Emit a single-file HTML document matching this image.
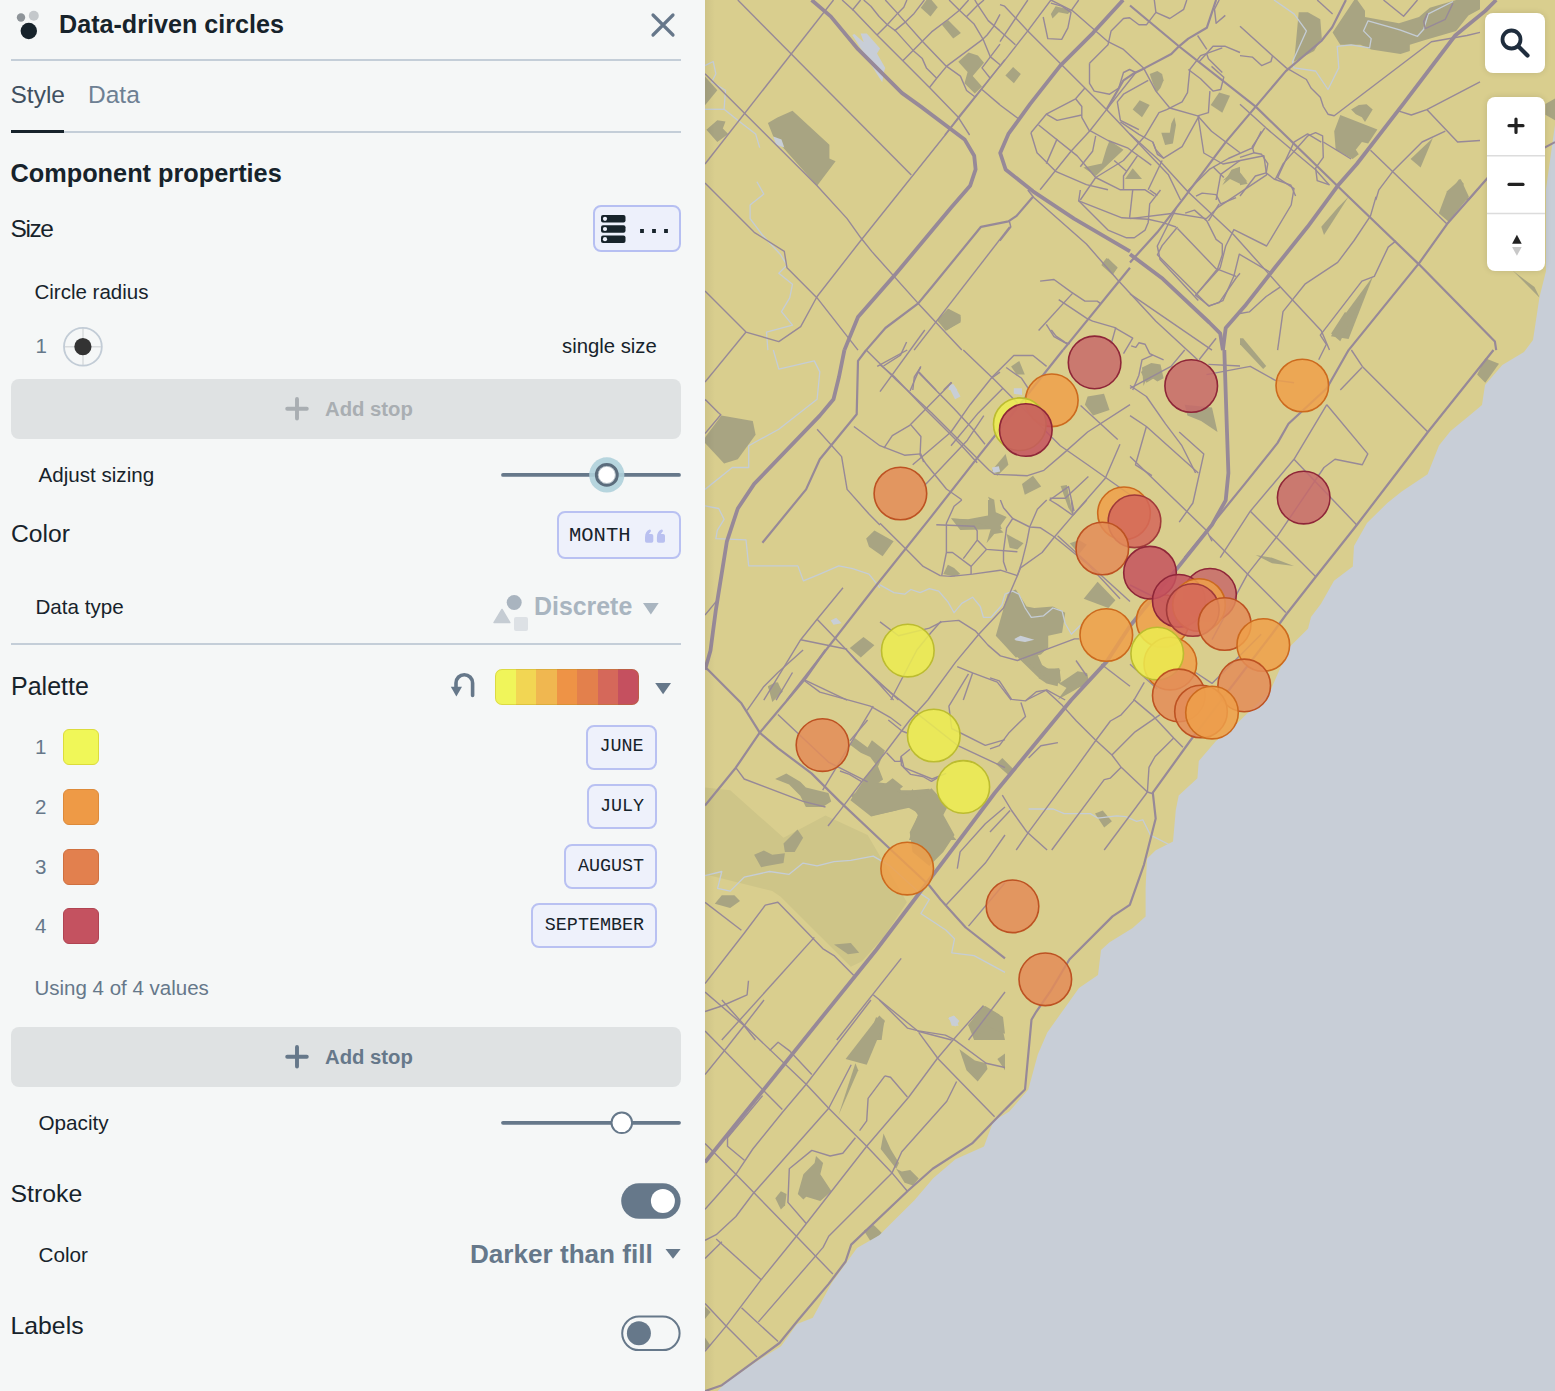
<!DOCTYPE html>
<html><head><meta charset="utf-8"><style>
html,body{margin:0;padding:0;width:1555px;height:1391px;overflow:hidden;background:#f5f7f7}
.t{position:absolute;white-space:nowrap}
.b{position:absolute}
#panel{position:absolute;left:0;top:0;width:705px;height:1391px;background:#f5f7f7}
#map{position:absolute;left:705px;top:0;width:850px;height:1391px;overflow:hidden;background:#d9cf8e}
</style></head><body>
<div id="panel">
<svg class="b" style="left:0;top:0" width="60" height="60" viewBox="0 0 60 60">
<circle cx="21" cy="17.5" r="4.2" fill="#8e9499"/><circle cx="33.8" cy="15.8" r="5" fill="#c4c8cb"/><circle cx="28.8" cy="31" r="8.2" fill="#17232b"/></svg>
<div class="t" style="left:59.0px;top:11.5px;font-size:25.15px;line-height:25.15px;font-weight:bold;color:#17232b;font-family:'Liberation Sans', sans-serif;letter-spacing:0px;">Data-driven circles</div>
<svg class="b" style="left:645px;top:7px" width="36" height="36" viewBox="645 7 36 36">
<path d="M653 15 L673 35 M673 15 L653 35" stroke="#66778a" stroke-width="3.2" stroke-linecap="round"/></svg>
<div class="b" style="left:11px;top:59px;width:670px;height:2px;background:#c4ced8"></div>
<div class="t" style="left:10.5px;top:83.3px;font-size:24.5px;line-height:24.5px;font-weight:normal;color:#3f5060;font-family:'Liberation Sans', sans-serif;letter-spacing:0px;">Style</div>
<div class="t" style="left:88.0px;top:83.3px;font-size:24.5px;line-height:24.5px;font-weight:normal;color:#6e8093;font-family:'Liberation Sans', sans-serif;letter-spacing:0px;">Data</div>
<div class="b" style="left:11px;top:131px;width:670px;height:2px;background:#c4ced8"></div>
<div class="b" style="left:11px;top:130px;width:53px;height:3px;background:#17232b"></div>
<div class="t" style="left:10.5px;top:161.4px;font-size:25.3px;line-height:25.3px;font-weight:bold;color:#17232b;font-family:'Liberation Sans', sans-serif;letter-spacing:0px;">Component properties</div>
<div class="t" style="left:10.5px;top:216.6px;font-size:24.5px;line-height:24.5px;font-weight:normal;color:#17232b;font-family:'Liberation Sans', sans-serif;letter-spacing:-1.4px;">Size</div>
<div class="b" style="left:593px;top:205px;width:84px;height:43px;border:2px solid #b6bff2;background:#edf0fb;border-radius:8px"></div>
<svg class="b" style="left:595px;top:205px" width="86" height="48" viewBox="595 205 86 48">
<rect x="601" y="215" width="24.5" height="7.6" rx="2" fill="#17232b"/>
<rect x="601" y="225.2" width="24.5" height="7.6" rx="2" fill="#17232b"/>
<rect x="601" y="235.4" width="24.5" height="7.6" rx="2" fill="#17232b"/>
<circle cx="605" cy="218.8" r="2.1" fill="#eef1fb"/><circle cx="605" cy="229" r="2.1" fill="#eef1fb"/><circle cx="605" cy="239.2" r="2.1" fill="#eef1fb"/>
<rect x="640.1" y="229" width="3.8" height="4" fill="#17232b"/><rect x="652.1" y="229" width="3.8" height="4" fill="#17232b"/><rect x="664.1" y="229" width="3.8" height="4" fill="#17232b"/>
</svg>
<div class="t" style="left:34.5px;top:281.6px;font-size:20.5px;line-height:20.5px;font-weight:normal;color:#17232b;font-family:'Liberation Sans', sans-serif;letter-spacing:0px;">Circle radius</div>
<div class="t" style="left:35.5px;top:335.6px;font-size:20.5px;line-height:20.5px;font-weight:normal;color:#66788a;font-family:'Liberation Sans', sans-serif;letter-spacing:0px;">1</div>
<svg class="b" style="left:60px;top:324px" width="46" height="46" viewBox="60 324 46 46">
<line x1="83" y1="328" x2="83" y2="366" stroke="#d9dcde" stroke-width="1.5"/>
<line x1="64" y1="346.8" x2="102" y2="346.8" stroke="#d9dcde" stroke-width="1.5"/>
<circle cx="82.9" cy="346.7" r="18.9" fill="none" stroke="#c2ccd6" stroke-width="1.8"/>
<circle cx="82.9" cy="346.7" r="8.6" fill="#333"/></svg>
<div class="t" style="left:562.0px;top:335.8px;font-size:20.3px;line-height:20.3px;font-weight:normal;color:#17232b;font-family:'Liberation Sans', sans-serif;letter-spacing:0px;">single size</div>
<div class="b" style="left:11px;top:379px;width:670px;height:60px;background:#dfe2e3;border-radius:8px"></div>
<svg class="b" style="left:280px;top:392px" width="34" height="34" viewBox="280 392 34 34">
<path d="M297 399 V418.6 M287.2 408.8 H306.8" stroke="#a9aeb2" stroke-width="3.9" stroke-linecap="round"/></svg>
<div class="t" style="left:325.0px;top:398.6px;font-size:20.3px;line-height:20.3px;font-weight:bold;color:#a9aeb2;font-family:'Liberation Sans', sans-serif;letter-spacing:0px;">Add stop</div>
<div class="t" style="left:38.5px;top:464.6px;font-size:20.6px;line-height:20.6px;font-weight:normal;color:#17232b;font-family:'Liberation Sans', sans-serif;letter-spacing:0px;">Adjust sizing</div>
<svg class="b" style="left:495px;top:452px" width="190" height="46" viewBox="495 452 190 46">
<line x1="503" y1="474.9" x2="679" y2="474.9" stroke="#66788a" stroke-width="3.8" stroke-linecap="round"/>
<circle cx="606.8" cy="474.9" r="17.6" fill="#afd0da" opacity="0.9"/>
<circle cx="606.8" cy="474.9" r="10.4" fill="#fff" stroke="#5b6c7c" stroke-width="3"/>
<circle cx="606.8" cy="474.9" r="8.6" fill="none" stroke="#9aa7b2" stroke-width="0.7"/>
</svg>
<div class="t" style="left:11.0px;top:521.9px;font-size:24.7px;line-height:24.7px;font-weight:normal;color:#17232b;font-family:'Liberation Sans', sans-serif;letter-spacing:0px;">Color</div>
<div class="b" style="left:557px;top:511px;width:120px;height:44px;border:2px solid #b9c1f2;background:#eef1fb;border-radius:8px"></div>
<div class="t" style="left:569.0px;top:526.3px;font-size:20.5px;line-height:20.5px;font-weight:normal;color:#17232b;font-family:'Liberation Mono', monospace;letter-spacing:0px;">MONTH</div>
<svg class="b" style="left:640px;top:524px" width="30" height="24" viewBox="640 524 30 24">
<path d="M645 541 V537.5 C645 533.5 646.8 530.6 649.6 529.6 Q651.2 529.4 651 531.2 L648.9 534 H651.5 Q653.3 534 653.3 535.8 V541 Q653.3 542.8 651.5 542.8 H646.8 Q645 542.8 645 541 Z" fill="#b9c0f0"/>
<path d="M656.9 541 V537.5 C656.9 533.5 658.7 530.6 661.5 529.6 Q663.1 529.4 662.9 531.2 L660.8 534 H663.2 Q665 534 665 535.8 V541 Q665 542.8 663.2 542.8 H658.7 Q656.9 542.8 656.9 541 Z" fill="#b9c0f0"/>
</svg>
<div class="t" style="left:35.5px;top:596.6px;font-size:20.6px;line-height:20.6px;font-weight:normal;color:#17232b;font-family:'Liberation Sans', sans-serif;letter-spacing:0px;">Data type</div>
<svg class="b" style="left:490px;top:590px" width="175" height="45" viewBox="490 590 175 45">
<circle cx="514.2" cy="602.5" r="7.5" fill="#a9b4bf"/>
<path d="M502 609.5 L509.8 622.6 L494 622.6 Z" fill="#c5ccd3" stroke="#c5ccd3" stroke-width="1.5" stroke-linejoin="round"/>
<rect x="514" y="617" width="14" height="14" rx="2" fill="#dde1e5"/>
<path d="M643 603 H658.7 L650.85 614.4 Z" fill="#a9b5c0"/>
</svg>
<div class="t" style="left:534.0px;top:593.6px;font-size:24.9px;line-height:24.9px;font-weight:bold;color:#a9b5c0;font-family:'Liberation Sans', sans-serif;letter-spacing:0px;">Discrete</div>
<div class="b" style="left:11px;top:642.8px;width:670px;height:2px;background:#c4ced8"></div>
<div class="t" style="left:11.0px;top:673.8px;font-size:25px;line-height:25px;font-weight:normal;color:#17232b;font-family:'Liberation Sans', sans-serif;letter-spacing:0px;">Palette</div>
<svg class="b" style="left:445px;top:665px" width="235" height="45" viewBox="445 665 235 45">
<path d="M472.6 695.5 V683 A8.3 8.3 0 0 0 456 683 V687" fill="none" stroke="#66788a" stroke-width="3.6" stroke-linecap="round"/>
<path d="M450.8 686.8 H462 L456.4 696.5 Z" fill="#66788a"/>
<path d="M655.2 683 H671 L663.1 694.3 Z" fill="#66788a"/>
</svg>
<div class="b" style="left:495px;top:669px;width:144px;height:36px;border-radius:7px;overflow:hidden;display:flex">
<div style="flex:1;background:#f0f55a"></div><div style="flex:1;background:#f2d653"></div><div style="flex:1;background:#f0b750"></div><div style="flex:1;background:#ee9346"></div><div style="flex:1;background:#e3804c"></div><div style="flex:1;background:#d5685a"></div><div style="flex:1;background:#c5505f"></div></div>
<div class="b" style="left:495px;top:669px;width:142px;height:34px;border-radius:7px;border:1px solid rgba(160,140,0,0.25)"></div>
<div class="t" style="left:35.0px;top:736.8px;font-size:20.5px;line-height:20.5px;font-weight:normal;color:#66788a;font-family:'Liberation Sans', sans-serif;letter-spacing:0px;">1</div>
<div class="b" style="left:63px;top:729px;width:34px;height:34px;border:1px solid #dcdc3c;background:#f0f758;border-radius:6px"></div>
<div class="b" style="left:586px;top:724.6px;width:66.6px;height:41px;border:2px solid #b9c1f2;background:#eef1fb;border-radius:8px"></div>
<div class="t" style="left:599.5px;top:738.0px;font-size:18.4px;line-height:18.4px;font-weight:normal;color:#17232b;font-family:'Liberation Mono', monospace;letter-spacing:0px;">JUNE</div>
<div class="t" style="left:35.0px;top:796.6px;font-size:20.5px;line-height:20.5px;font-weight:normal;color:#66788a;font-family:'Liberation Sans', sans-serif;letter-spacing:0px;">2</div>
<div class="b" style="left:63px;top:789.2px;width:34px;height:34px;border:1px solid #dd8a3a;background:#ee9a46;border-radius:6px"></div>
<div class="b" style="left:586.5px;top:784.3px;width:66.1px;height:41px;border:2px solid #b9c1f2;background:#eef1fb;border-radius:8px"></div>
<div class="t" style="left:600.0px;top:797.7px;font-size:18.4px;line-height:18.4px;font-weight:normal;color:#17232b;font-family:'Liberation Mono', monospace;letter-spacing:0px;">JULY</div>
<div class="t" style="left:35.0px;top:856.6px;font-size:20.5px;line-height:20.5px;font-weight:normal;color:#66788a;font-family:'Liberation Sans', sans-serif;letter-spacing:0px;">3</div>
<div class="b" style="left:63px;top:849.1px;width:34px;height:34px;border:1px solid #cf7040;background:#e2804e;border-radius:6px"></div>
<div class="b" style="left:564.4px;top:844.4px;width:88.2px;height:41px;border:2px solid #b9c1f2;background:#eef1fb;border-radius:8px"></div>
<div class="t" style="left:577.9px;top:857.8px;font-size:18.4px;line-height:18.4px;font-weight:normal;color:#17232b;font-family:'Liberation Mono', monospace;letter-spacing:0px;">AUGUST</div>
<div class="t" style="left:35.0px;top:915.6px;font-size:20.5px;line-height:20.5px;font-weight:normal;color:#66788a;font-family:'Liberation Sans', sans-serif;letter-spacing:0px;">4</div>
<div class="b" style="left:63px;top:908px;width:34px;height:34px;border:1px solid #b04452;background:#c45260;border-radius:6px"></div>
<div class="b" style="left:531.3px;top:903.4px;width:121.3px;height:41px;border:2px solid #b9c1f2;background:#eef1fb;border-radius:8px"></div>
<div class="t" style="left:544.8px;top:916.8px;font-size:18.4px;line-height:18.4px;font-weight:normal;color:#17232b;font-family:'Liberation Mono', monospace;letter-spacing:0px;">SEPTEMBER</div>
<div class="t" style="left:34.5px;top:977.8px;font-size:20.5px;line-height:20.5px;font-weight:normal;color:#66788a;font-family:'Liberation Sans', sans-serif;letter-spacing:0px;">Using 4 of 4 values</div>
<div class="b" style="left:11px;top:1027px;width:670px;height:60px;background:#dfe2e3;border-radius:8px"></div>
<svg class="b" style="left:280px;top:1040px" width="34" height="34" viewBox="280 1040 34 34">
<path d="M297 1047 V1066.6 M287.2 1056.8 H306.8" stroke="#66788a" stroke-width="3.9" stroke-linecap="round"/></svg>
<div class="t" style="left:325.0px;top:1046.6px;font-size:20.3px;line-height:20.3px;font-weight:bold;color:#66788a;font-family:'Liberation Sans', sans-serif;letter-spacing:0px;">Add stop</div>
<div class="t" style="left:38.5px;top:1113.0px;font-size:20.7px;line-height:20.7px;font-weight:normal;color:#17232b;font-family:'Liberation Sans', sans-serif;letter-spacing:0px;">Opacity</div>
<svg class="b" style="left:495px;top:1105px" width="190" height="36" viewBox="495 1105 190 36">
<line x1="503" y1="1122.8" x2="679" y2="1122.8" stroke="#66788a" stroke-width="3.8" stroke-linecap="round"/>
<circle cx="621.8" cy="1122.8" r="10.3" fill="#fff" stroke="#66788a" stroke-width="2"/>
</svg>
<div class="t" style="left:10.5px;top:1182.0px;font-size:24.8px;line-height:24.8px;font-weight:normal;color:#17232b;font-family:'Liberation Sans', sans-serif;letter-spacing:0px;">Stroke</div>
<svg class="b" style="left:615px;top:1178px" width="70" height="46" viewBox="615 1178 70 46">
<rect x="621.2" y="1183.2" width="59.4" height="35.6" rx="17.8" fill="#66788a"/>
<circle cx="662.9" cy="1200.9" r="12" fill="#fff"/></svg>
<div class="t" style="left:38.5px;top:1244.5px;font-size:20.7px;line-height:20.7px;font-weight:normal;color:#17232b;font-family:'Liberation Sans', sans-serif;letter-spacing:0px;">Color</div>
<div class="t" style="left:470.0px;top:1240.8px;font-size:26.1px;line-height:26.1px;font-weight:bold;color:#66788a;font-family:'Liberation Sans', sans-serif;letter-spacing:0px;">Darker than fill</div>
<svg class="b" style="left:660px;top:1245px" width="25" height="20" viewBox="660 1245 25 20">
<path d="M665.5 1249 H680.6 L673 1258.7 Z" fill="#66788a"/></svg>
<div class="t" style="left:10.5px;top:1314.4px;font-size:24.8px;line-height:24.8px;font-weight:normal;color:#17232b;font-family:'Liberation Sans', sans-serif;letter-spacing:0px;">Labels</div>
<svg class="b" style="left:615px;top:1310px" width="70" height="46" viewBox="615 1310 70 46">
<rect x="622.2" y="1316.5" width="57.4" height="33.6" rx="16.8" fill="none" stroke="#66788a" stroke-width="2"/>
<circle cx="638.9" cy="1333.3" r="12" fill="#66788a"/></svg>
</div>
<div id="map">
<svg class="b" style="left:0;top:0" width="850" height="1391" viewBox="705 0 850 1391">
<rect x="705" y="0" width="850" height="1391" fill="#d9ce8e"/>
<polygon points="705.0,787.4 730.2,790.2 783.5,837.8 825.5,815.4 867.6,835.0 906.9,902.3 884.4,936.0 862.0,961.2 850.8,966.8 780.7,896.7 772.3,891.1 705.0,874.3" fill="#cec588"/>
<polygon points="767.9,123.0 777.4,117.5 792.5,110.7 829.4,144.8 829.4,158.5 835.6,161.2 817.1,185.8 795.2,161.2 773.3,136.6" fill="#a8a482"/>
<polygon points="705.0,76.5 717.3,90.2 705.0,105.2" fill="#a8a482"/>
<polygon points="706.4,129.8 717.3,120.3 725.5,121.6 722.8,128.5 728.2,133.9 717.3,142.1" fill="#a8a482"/>
<polygon points="937.3,319.8 948.2,308.8 960.5,317.0 960.5,322.5 945.5,330.7" fill="#a8a482"/>
<polygon points="1101.3,265.1 1108.1,258.3 1117.7,267.8 1112.2,274.7" fill="#a8a482"/>
<polygon points="1438.8,213.2 1447.0,191.3 1460.7,179.0 1468.9,196.8 1448.4,221.4" fill="#a8a482"/>
<polygon points="1321.3,226.8 1337.7,207.7 1348.6,196.8 1324.0,235.0" fill="#a8a482"/>
<polygon points="1330.9,336.2 1345.9,312.9 1373.2,276.0 1348.6,338.9" fill="#a8a482"/>
<polygon points="1222.9,180.4 1236.6,168.1 1247.5,181.7 1231.1,177.6" fill="#a8a482"/>
<polygon points="1545.4,103.9 1555.0,98.4 1555.0,120.3 1545.4,114.8" fill="#a8a482"/>
<polygon points="1512.6,270.6 1534.5,287.0 1539.9,297.9 1518.1,276.0" fill="#a8a482"/>
<polygon points="705.0,437.5 721.4,415.6 752.8,421.1 755.6,434.7 737.8,459.3 724.1,463.4 705.0,442.9" fill="#a8a482"/>
<polygon points="866.2,538.6 874.4,530.4 893.6,541.3 882.6,556.3 869.0,546.8" fill="#a8a482"/>
<polygon points="1087.6,396.5 1104.0,393.7 1109.5,410.1 1093.1,415.6 1084.9,404.7" fill="#a8a482"/>
<polygon points="1011.1,366.4 1019.3,360.9 1024.8,374.6 1016.6,374.6" fill="#a8a482"/>
<polygon points="849.8,647.9 863.5,637.0 874.4,645.2 860.8,657.5" fill="#a8a482"/>
<polygon points="1022.0,483.9 1033.0,475.7 1041.2,486.6 1024.8,494.8" fill="#a8a482"/>
<polygon points="767.9,686.2 776.1,682.1 782.9,691.6 773.3,700.1" fill="#a8a482"/>
<polygon points="992.0,470.3 1005.6,453.9 1008.4,464.8 997.4,475.7" fill="#a8a482"/>
<polygon points="1038.4,678.0 1060.3,669.8 1057.6,686.2 1046.6,683.4" fill="#a8a482"/>
<polygon points="1184.7,404.7 1212.0,407.4 1217.5,432.0 1201.1,421.1 1187.4,415.6" fill="#a8a482"/>
<polygon points="1140.9,371.9 1151.9,363.7 1160.1,374.6 1146.4,382.8" fill="#a8a482"/>
<polygon points="1477.1,374.6 1485.3,358.2 1499.0,363.7 1485.3,382.8" fill="#a8a482"/>
<polygon points="1255.7,555.0 1272.1,557.7 1294.0,565.9 1272.1,563.2" fill="#a8a482"/>
<polygon points="850.8,795.8 873.2,781.8 895.6,784.6 901.2,790.2 912.5,790.2 929.3,788.8 940.5,809.8 954.5,835.0 943.3,851.9 929.3,865.9 912.5,851.9 909.7,832.2 918.1,815.4 912.5,807.0 873.2,815.4 862.0,807.0" fill="#a8a482"/>
<polygon points="775.1,779.0 786.3,773.4 800.3,781.8 805.9,787.4 828.4,793.0 831.2,801.4 822.7,807.0 805.9,807.0 800.3,795.8 789.1,784.6" fill="#a8a482"/>
<polygon points="768.1,686.4 777.9,682.2 782.1,692.1 772.3,701.9" fill="#a8a482"/>
<polygon points="783.5,843.4 797.5,829.4 803.1,837.8 794.7,851.9 784.9,851.9" fill="#a8a482"/>
<polygon points="754.1,854.7 763.9,850.4 772.3,854.7 784.9,853.3 783.5,863.1 766.7,865.9 761.1,867.3" fill="#a8a482"/>
<polygon points="714.8,903.7 721.8,895.3 734.4,895.3 740.0,900.9 730.2,907.9" fill="#a8a482"/>
<polygon points="834.0,944.4 850.8,943.0 859.2,952.8 848.0,954.2" fill="#a8a482"/>
<polygon points="867.6,1040.0 876.0,1017.3 884.4,1020.1 881.6,1040.0" fill="#a8a482"/>
<polygon points="968.5,1025.7 985.3,1006.0 999.4,1014.5 1005.0,1040.0 974.1,1040.0" fill="#a8a482"/>
<polygon points="845.6,1059.0 879.3,1015.5 884.9,1021.1 882.1,1028.1 866.7,1064.7" fill="#a8a482"/>
<polygon points="838.5,1115.3 855.4,1063.3 858.2,1070.3" fill="#a8a482"/>
<polygon points="797.8,1194.0 803.4,1174.3 814.6,1163.1 816.0,1156.0 823.1,1163.1 820.3,1174.3 831.5,1191.2 820.3,1201.0 806.2,1196.8 803.4,1199.6" fill="#a8a482"/>
<polygon points="775.3,1198.2 780.9,1191.2 786.5,1194.0 785.1,1205.2 780.9,1209.4" fill="#a8a482"/>
<polygon points="880.7,1149.0 883.5,1133.5 890.5,1149.0 899.0,1163.1 896.2,1168.7" fill="#a8a482"/>
<polygon points="896.2,1168.7 901.8,1171.5 910.2,1170.1 918.7,1178.5 913.0,1185.5 904.6,1182.7" fill="#a8a482"/>
<polygon points="863.8,1230.5 873.7,1224.9 882.1,1233.3 870.9,1241.8" fill="#a8a482"/>
<polygon points="967.9,1025.3 983.3,1005.6 1003.0,1016.9 1005.0,1033.7 997.4,1030.9 986.1,1025.3 977.7,1036.5" fill="#a8a482"/>
<polygon points="959.4,1049.2 974.9,1060.4 986.1,1063.3 987.5,1068.9 977.7,1081.5 966.5,1070.3" fill="#a8a482"/>
<polygon points="997.4,1059.0 1005.0,1053.4 1005.0,1070.3" fill="#a8a482"/>
<polygon points="705.0,1306.4 710.6,1312.1 705.0,1319.1" fill="#a8a482"/>
<polygon points="705.0,1337.4 710.6,1345.8 705.0,1350.0" fill="#a8a482"/>
<polygon points="1050.9,13.9 1055.6,6.2 1067.9,9.3 1071.0,10.8 1067.9,13.9 1058.7,12.3 1052.5,18.5" fill="#a8a482"/>
<polygon points="1005.4,75.6 1013.1,67.1 1020.8,74.1 1013.9,83.3" fill="#a8a482"/>
<polygon points="1149.7,74.1 1157.4,71.0 1162.1,74.1 1163.6,80.3 1160.5,88.0 1156.7,92.6 1152.8,83.3" fill="#a8a482"/>
<polygon points="1132.7,109.6 1139.7,100.3 1149.7,105.0 1142.0,117.3" fill="#a8a482"/>
<polygon points="1161.3,132.7 1169.8,132.7 1171.3,123.5 1174.4,117.3 1176.0,125.0 1172.9,143.5 1165.1,145.1" fill="#a8a482"/>
<polygon points="1083.3,167.5 1101.9,163.6 1106.5,148.2 1109.6,140.5 1123.5,149.7 1095.7,176.0" fill="#a8a482"/>
<polygon points="1125.0,179.0 1132.7,168.2 1142.0,179.0" fill="#a8a482"/>
<polygon points="1210.7,105.0 1219.2,92.6 1230.0,95.7 1222.3,112.7" fill="#a8a482"/>
<polygon points="1222.3,185.2 1231.5,169.8 1240.0,166.7 1240.0,183.7 1230.0,179.0" fill="#a8a482"/>
<polygon points="920.8,7.7 926.4,0.0 931.6,0.0 937.7,7.2 930.5,16.5" fill="#a8a482"/>
<polygon points="941.9,24.7 948.0,20.1 960.9,32.9 953.2,38.6" fill="#a8a482"/>
<polygon points="958.3,61.7 968.6,52.5 977.9,55.6 984.0,62.8 972.7,76.1 982.0,86.4 974.8,93.6 964.5,83.3 967.6,72.0" fill="#a8a482"/>
<polygon points="1332.6,32.4 1354.2,0.0 1357.3,0.0 1365.0,10.8 1365.0,17.0 1399.0,23.2 1419.0,17.0 1429.8,7.7 1456.1,0.0 1480.0,0.0 1480.0,9.3 1468.4,15.4 1456.1,30.9 1425.2,40.1 1409.8,44.8 1409.8,50.9 1400.5,54.0 1371.2,49.4 1360.4,44.8 1340.3,44.8" fill="#a8a482"/>
<polygon points="1295.6,46.3 1298.7,12.3 1307.9,12.3 1320.3,19.3 1321.8,38.6 1314.1,50.9 1294.0,61.7" fill="#a8a482"/>
<polygon points="1351.1,109.6 1358.8,105.0 1366.6,104.2 1372.7,109.6 1365.0,121.9 1361.9,117.3 1355.8,114.2" fill="#a8a482"/>
<polygon points="1334.2,131.2 1340.3,115.0 1377.4,129.6 1368.1,143.5 1361.9,142.0 1355.8,149.7 1358.8,154.3 1352.7,159.0 1335.7,149.7" fill="#a8a482"/>
<polygon points="1410.6,159.0 1432.9,138.1 1420.6,167.5" fill="#a8a482"/>
<polygon points="1444.5,200.0 1459.2,179.0 1463.8,183.7 1462.3,188.3 1470.0,200.0" fill="#a8a482"/>
<polygon points="1240.0,172.9 1247.7,183.7 1240.0,185.2" fill="#a8a482"/>
<polygon points="1101.9,264.1 1106.5,257.9 1117.3,267.2 1112.7,274.9" fill="#a8a482"/>
<polygon points="1142.0,367.5 1151.3,362.9 1160.5,364.4 1163.6,378.3 1157.4,381.4 1148.2,375.2 1143.5,386.0" fill="#a8a482"/>
<polygon points="937.5,321.2 948.3,308.8 960.6,315.0 960.6,321.2 946.8,330.5" fill="#a8a482"/>
<polygon points="1060.6,485.9 1066.8,485.1 1072.9,515.2 1068.3,507.5" fill="#a8a482"/>
<polygon points="951.0,518.3 988.0,521.4 994.2,499.8 988.0,496.7 1001.9,529.1 960.3,530.0" fill="#a8a482"/>
<polygon points="1010.1,650.0 1045.6,650.0 1040.9,654.6 1020.9,659.3 1036.3,662.3 1044.0,668.5 1059.5,668.5 1061.0,680.9 1056.4,682.4 1048.7,676.2 1039.4,678.6" fill="#a8a482"/>
<polygon points="1057.9,699.4 1067.2,687.0 1074.9,682.4 1082.6,673.2 1087.2,673.2 1088.8,680.9 1074.9,690.1" fill="#a8a482"/>
<polygon points="996.2,764.2 1002.3,758.0 1014.7,770.4 1008.5,775.0" fill="#a8a482"/>
<polygon points="1095.0,813.6 1102.7,810.5 1111.9,821.3 1104.2,827.5" fill="#a8a482"/>
<polygon points="951.0,518.5 968.0,519.3 988.0,515.4 988.0,500.0 994.2,500.0 995.8,512.3 1006.6,517.0 998.8,527.8 1003.5,532.4 994.2,534.0 986.5,543.2 991.1,527.8 978.8,523.2 966.4,522.4 955.6,520.8" fill="#a8a482"/>
<polygon points="1006.6,534.0 1023.5,543.2 1017.4,549.4 1009.6,547.8" fill="#a8a482"/>
<polygon points="943.3,574.1 947.9,564.8 954.1,567.9 960.3,574.1 954.1,576.4" fill="#a8a482"/>
<polygon points="1083.7,598.8 1097.6,581.8 1115.4,600.3 1108.4,608.0" fill="#a8a482"/>
<polygon points="995.8,635.8 1008.1,592.6 1015.8,589.5 1026.6,606.5 1034.3,608.0 1052.9,606.5 1065.2,612.7 1062.1,632.7 1048.2,635.8 1048.2,648.2 1034.3,654.3 1015.8,657.4" fill="#a8a482"/>
<polygon points="1022.0,659.0 1037.4,654.3 1042.1,665.1 1049.8,669.8 1059.0,668.2 1060.6,683.7 1054.4,682.1 1045.1,676.0" fill="#a8a482"/>
<polygon points="1059.0,683.7 1077.6,671.3 1086.8,672.9 1086.8,685.2 1069.8,689.8" fill="#a8a482"/>
<polygon points="1069.8,543.2 1079.1,540.1 1086.8,544.8 1079.1,554.0" fill="#a8a482"/>
<polygon points="850.4,745.0 854.7,738.1 867.6,747.6 871.9,740.3 884.9,750.6 878.0,766.6 883.1,779.5 874.5,785.6 878.0,789.5 892.6,778.2 903.0,786.4 897.0,791.6 909.0,795.0 912.5,789.0 917.7,798.5 931.5,788.2 947.9,806.3 940.1,821.0 956.5,840.0 909.0,840.0 918.5,813.2 904.7,805.4 896.1,810.6 871.1,816.6 850.4,800.2 864.2,779.5 875.4,764.0 870.2,757.1 860.7,752.8" fill="#a8a482"/>
<polygon points="1331.1,333.5 1345.0,311.9 1351.1,316.6 1372.7,276.4 1340.3,341.3" fill="#a8a482"/>
<polygon points="1240.0,338.2 1243.1,338.2 1266.2,366.0 1263.2,369.0 1240.0,344.3" fill="#a8a482"/>
<polyline points="705.0,65.6 713.2,61.5 715.9,73.8 711.8,82.0 725.5,90.2 724.1,109.3 737.8,120.3 755.6,133.9 759.7,147.6" fill="none" stroke="#c5cdd6" stroke-width="1.3" stroke-linejoin="round"/>
<polyline points="705.0,109.3 724.1,109.3" fill="none" stroke="#c5cdd6" stroke-width="1.3" stroke-linejoin="round"/>
<polyline points="756.9,181.7 763.8,194.0 750.1,205.0 750.1,218.6 762.4,235.0 780.2,254.2 787.0,265.1 778.8,273.3 792.5,284.2 789.7,297.9 781.5,311.6 792.5,325.2 766.5,332.1 767.9,350.1" fill="none" stroke="#c5cdd6" stroke-width="1.3" stroke-linejoin="round"/>
<polyline points="773.3,350.0 778.8,369.1 814.3,360.9 819.8,371.9 817.1,399.2 778.8,429.3 748.7,445.7 748.7,467.5 732.3,467.5 705.0,489.4" fill="none" stroke="#c5cdd6" stroke-width="1.3" stroke-linejoin="round"/>
<polyline points="705.0,875.7 721.8,871.5 717.6,888.3 730.2,891.1 744.2,877.1 769.5,871.5 789.1,874.3 803.1,863.1 817.1,865.9 834.0,861.7 850.8,860.3 873.2,856.1 890.0,865.9 920.9,893.9 929.3,899.5 920.9,913.5 946.1,930.3 954.5,938.8 951.7,952.8 974.1,955.6 1005.0,972.4" fill="none" stroke="#c5cdd6" stroke-width="1.3" stroke-linejoin="round"/>
<polyline points="1274.0,0.0 1294.0,13.9 1306.4,30.9 1292.5,61.7 1294.0,67.9 1315.6,71.0 1328.0,89.5 1338.8,67.9 1337.2,46.3 1351.1,44.8 1369.6,47.8 1371.2,38.6 1363.5,30.9 1368.1,20.8 1392.8,27.8 1400.5,30.1 1417.5,36.3 1423.7,29.3 1428.3,13.9 1453.0,1.5" fill="none" stroke="#c5cdd6" stroke-width="1.3" stroke-linejoin="round"/>
<polyline points="1028.6,809.0 1053.3,809.0 1064.1,813.6 1090.3,813.6 1098.0,818.2 1110.4,816.7 1116.6,815.9 1125.8,816.7 1136.6,821.3 1142.8,819.8 1150.5,835.2 1169.0,844.5" fill="none" stroke="#c5cdd6" stroke-width="1.3" stroke-linejoin="round"/>
<polyline points="705.0,505.8 718.7,508.5 724.1,519.4 717.3,530.4 715.9,538.6 746.0,539.9 748.7,565.9 773.3,565.9 797.9,565.9 803.4,580.9 819.8,574.1 838.9,565.9 852.6,568.6 869.0,574.1 879.9,587.8" fill="none" stroke="#c5cdd6" stroke-width="1.3" stroke-linejoin="round"/>
<polyline points="880.0,584.9 893.9,592.6 904.7,594.2 910.9,589.5 920.1,592.6 929.4,588.7 938.7,591.1 947.9,601.9 954.1,612.7 961.8,603.4 972.6,597.2 980.3,606.5 983.4,617.3 991.1,617.3 1001.9,605.0 1005.0,594.2 1012.7,591.1 1018.9,594.2 1025.1,608.0 1031.3,617.3 1043.6,615.8 1052.9,608.0 1062.1,611.1 1065.2,623.5 1071.4,634.3 1080.6,625.0" fill="none" stroke="#c5cdd6" stroke-width="1.3" stroke-linejoin="round"/>
<polygon points="773.3,136.6 781.5,139.4 784.3,147.6 776.1,144.8" fill="#c8ced7"/>
<polygon points="948.2,385.5 953.7,384.2 960.5,396.5 955.1,399.2" fill="#c8ced7"/>
<polygon points="1013.8,388.3 1022.0,388.3 1022.0,395.1 1013.8,393.7" fill="#c8ced7"/>
<polygon points="992.0,467.5 998.8,466.2 1000.2,471.6 993.3,473.0" fill="#c8ced7"/>
<polygon points="830.7,620.6 836.2,617.8 841.6,623.3 833.5,624.7" fill="#c8ced7"/>
<polygon points="948.9,1017.3 954.5,1015.9 958.7,1025.7 951.7,1025.7" fill="#c8ced7"/>
<polygon points="948.2,1018.3 953.8,1015.5 959.4,1021.1 955.2,1026.7" fill="#c8ced7"/>
<polygon points="852.3,35.0 854.4,34.0 863.7,42.2 860.6,33.4 866.8,33.4 880.1,48.4 877.0,53.5 885.3,67.9 884.2,71.0 882.2,82.3" fill="#c8ced7"/>
<polygon points="949.8,384.5 952.9,384.5 957.6,390.0 948.3,390.0" fill="#c8ced7"/>
<polygon points="1014.3,638.9 1020.5,635.8 1034.3,639.7 1025.1,642.0 1015.8,640.5" fill="#c8ced7"/>
<polygon points="1555.0,124.7 1546.0,189.0 1546.0,271.0 1539.5,297.0 1533.0,340.0 1524.0,352.0 1502.3,365.0 1485.0,385.0 1482.0,405.0 1468.0,416.8 1450.6,431.0 1439.0,445.6 1427.6,474.3 1401.7,491.6 1387.3,503.0 1367.0,523.0 1354.0,546.0 1352.8,566.4 1334.0,580.7 1321.0,603.8 1311.0,617.0 1308.0,628.8 1289.5,647.0 1270.0,691.4 1239.0,721.6 1216.0,741.0 1198.8,761.0 1197.4,778.3 1178.7,795.6 1175.8,810.0 1173.0,841.6 1155.7,850.2 1147.0,858.8 1145.6,887.6 1145.6,916.4 1132.7,928.0 1109.6,942.2 1101.0,950.0 1098.0,975.0 1079.0,988.0 1047.3,1032.4 1037.8,1054.6 1028.3,1089.5 1009.3,1111.6 993.4,1121.0 984.0,1146.5 955.4,1159.2 933.2,1178.2 914.2,1200.4 892.0,1222.6 879.3,1235.3 857.0,1248.0 831.8,1282.8 812.8,1317.7 797.0,1324.0 781.0,1346.2 755.7,1362.0 724.0,1384.2 717.7,1391.0 1555.0,1391.0" fill="#c8ced7"/>
<polyline points="737.8,0.0 911.3,174.9" fill="none" stroke="#978998" stroke-width="1.4" stroke-linejoin="round"/>
<polyline points="705.0,73.8 817.1,185.8 847.1,218.6 860.8,237.8 871.7,251.4 918.2,303.4 961.9,350.1" fill="none" stroke="#978998" stroke-width="1.4" stroke-linejoin="round"/>
<polyline points="705.0,183.1 754.2,232.3 784.3,251.4 787.0,267.8 817.1,297.9 858.0,350.1" fill="none" stroke="#978998" stroke-width="1.4" stroke-linejoin="round"/>
<polyline points="833.5,0.0 705.0,164.0" fill="none" stroke="#978998" stroke-width="1.4" stroke-linejoin="round"/>
<polyline points="705.0,291.1 746.0,332.1 778.8,341.6 800.7,326.6 817.1,296.5 860.8,240.5 948.2,131.2 981.6,89.4 1004.8,59.6" fill="none" stroke="#978998" stroke-width="1.4" stroke-linejoin="round"/>
<polyline points="914.1,350.1 1009.7,226.8" fill="none" stroke="#978998" stroke-width="1.4" stroke-linejoin="round"/>
<polyline points="1130.0,133.9 1160.1,161.2 1187.4,191.3 1233.9,235.0 1283.0,289.7 1321.3,330.7 1329.5,350.1" fill="none" stroke="#978998" stroke-width="1.4" stroke-linejoin="round"/>
<polyline points="1130.0,293.8 1212.0,350.1" fill="none" stroke="#978998" stroke-width="1.4" stroke-linejoin="round"/>
<polyline points="1370.5,150.3 1447.0,224.1" fill="none" stroke="#978998" stroke-width="1.4" stroke-linejoin="round"/>
<polyline points="1376.0,196.8 1370.5,215.9 1354.1,240.5 1337.7,262.4 1304.9,284.2 1283.0,311.6 1277.6,350.1" fill="none" stroke="#978998" stroke-width="1.4" stroke-linejoin="round"/>
<polyline points="1198.3,117.5 1203.8,153.0 1222.9,164.0 1263.9,155.8 1266.6,174.9 1217.5,207.7 1206.5,218.6 1173.7,213.2 1130.0,218.6" fill="none" stroke="#978998" stroke-width="1.4" stroke-linejoin="round"/>
<polyline points="1321.3,142.1 1307.6,133.9 1294.0,142.1 1277.6,177.6 1294.0,188.6 1291.2,205.0 1266.6,246.0 1233.9,229.6 1225.7,246.0 1220.2,267.8 1195.6,295.2 1209.3,306.1 1222.9,300.6 1233.9,276.0 1239.3,254.2 1272.1,273.3" fill="none" stroke="#978998" stroke-width="1.4" stroke-linejoin="round"/>
<polyline points="1261.2,131.2 1253.0,147.6 1228.4,158.5 1209.3,169.4 1187.4,191.3" fill="none" stroke="#978998" stroke-width="1.4" stroke-linejoin="round"/>
<polyline points="1176.5,207.7 1157.3,246.0 1160.1,259.6 1198.3,300.6" fill="none" stroke="#978998" stroke-width="1.4" stroke-linejoin="round"/>
<polyline points="853.9,426.5 879.9,445.7 904.5,455.2 920.9,453.9 923.6,462.1" fill="none" stroke="#978998" stroke-width="1.4" stroke-linejoin="round"/>
<polyline points="705.0,399.2 718.7,412.9" fill="none" stroke="#978998" stroke-width="1.4" stroke-linejoin="round"/>
<polyline points="817.1,429.3 841.6,456.6 847.1,489.4 869.0,514.0 879.9,524.9" fill="none" stroke="#978998" stroke-width="1.4" stroke-linejoin="round"/>
<polyline points="866.2,350.0 896.3,380.1 931.8,412.9 989.2,470.3 994.7,474.4 1027.5,475.7 1043.9,470.3 1063.0,453.9 1087.6,432.0 1130.0,404.7" fill="none" stroke="#978998" stroke-width="1.4" stroke-linejoin="round"/>
<polyline points="963.3,350.0 994.7,380.1 1027.5,412.9 1060.3,445.7 1087.6,464.8 1130.0,494.8" fill="none" stroke="#978998" stroke-width="1.4" stroke-linejoin="round"/>
<polyline points="910.0,391.0 918.2,371.9 920.9,366.4" fill="none" stroke="#978998" stroke-width="1.4" stroke-linejoin="round"/>
<polyline points="877.2,366.4 907.2,350.0" fill="none" stroke="#978998" stroke-width="1.4" stroke-linejoin="round"/>
<polyline points="992.0,377.3 1013.8,355.5 1033.0,355.5 1046.6,366.4" fill="none" stroke="#978998" stroke-width="1.4" stroke-linejoin="round"/>
<polyline points="705.0,615.1 717.3,600.1" fill="none" stroke="#978998" stroke-width="1.4" stroke-linejoin="round"/>
<polyline points="763.8,700.1 800.7,639.7 817.1,619.2 843.0,587.8" fill="none" stroke="#978998" stroke-width="1.4" stroke-linejoin="round"/>
<polyline points="817.1,619.2 879.9,684.8 893.6,700.1" fill="none" stroke="#978998" stroke-width="1.4" stroke-linejoin="round"/>
<polyline points="803.4,679.3 847.1,700.1" fill="none" stroke="#978998" stroke-width="1.4" stroke-linejoin="round"/>
<polyline points="800.7,639.7 847.1,649.3" fill="none" stroke="#978998" stroke-width="1.4" stroke-linejoin="round"/>
<polyline points="951.0,445.7 978.3,412.9 1002.9,388.3" fill="none" stroke="#978998" stroke-width="1.4" stroke-linejoin="round"/>
<polyline points="912.7,464.8 951.0,432.0 970.1,404.7 992.0,377.3" fill="none" stroke="#978998" stroke-width="1.4" stroke-linejoin="round"/>
<polyline points="923.6,486.6 967.4,440.2 983.8,415.6" fill="none" stroke="#978998" stroke-width="1.4" stroke-linejoin="round"/>
<polyline points="1049.4,500.3 1068.5,486.6 1074.0,511.2" fill="none" stroke="#978998" stroke-width="1.4" stroke-linejoin="round"/>
<polyline points="1057.6,535.8 1130.0,601.4" fill="none" stroke="#978998" stroke-width="1.4" stroke-linejoin="round"/>
<polyline points="776.1,700.1 792.5,672.5" fill="none" stroke="#978998" stroke-width="1.4" stroke-linejoin="round"/>
<polyline points="1101.3,664.3 1130.0,686.2" fill="none" stroke="#978998" stroke-width="1.4" stroke-linejoin="round"/>
<polyline points="1351.4,350.0 1362.3,366.4 1427.9,432.0" fill="none" stroke="#978998" stroke-width="1.4" stroke-linejoin="round"/>
<polyline points="1294.0,459.3 1356.8,524.9" fill="none" stroke="#978998" stroke-width="1.4" stroke-linejoin="round"/>
<polyline points="1250.3,511.2 1315.8,576.8" fill="none" stroke="#978998" stroke-width="1.4" stroke-linejoin="round"/>
<polyline points="1209.3,535.8 1285.8,612.4" fill="none" stroke="#978998" stroke-width="1.4" stroke-linejoin="round"/>
<polyline points="1130.0,456.6 1206.5,530.4 1212.0,541.3" fill="none" stroke="#978998" stroke-width="1.4" stroke-linejoin="round"/>
<polyline points="1326.8,404.7 1367.8,453.9 1362.3,464.8 1335.0,459.3 1324.0,467.5 1277.6,535.8 1247.5,574.1 1212.0,639.7" fill="none" stroke="#978998" stroke-width="1.4" stroke-linejoin="round"/>
<polyline points="1220.2,557.7 1250.3,511.2 1294.0,459.3 1326.8,404.7" fill="none" stroke="#978998" stroke-width="1.4" stroke-linejoin="round"/>
<polyline points="1130.0,385.5 1146.4,396.5 1165.5,423.8 1181.9,445.7 1195.6,473.0" fill="none" stroke="#978998" stroke-width="1.4" stroke-linejoin="round"/>
<polyline points="1130.0,415.6 1146.4,426.5 1173.7,451.1 1198.3,473.0" fill="none" stroke="#978998" stroke-width="1.4" stroke-linejoin="round"/>
<polyline points="1146.4,426.5 1135.5,464.8 1151.9,475.7" fill="none" stroke="#978998" stroke-width="1.4" stroke-linejoin="round"/>
<polyline points="1179.2,432.0 1203.8,453.9 1192.9,503.0 1179.2,522.2" fill="none" stroke="#978998" stroke-width="1.4" stroke-linejoin="round"/>
<polyline points="1130.0,388.3 1171.0,366.4 1184.7,350.0" fill="none" stroke="#978998" stroke-width="1.4" stroke-linejoin="round"/>
<polyline points="1206.5,374.6 1250.3,366.4 1274.8,380.1 1294.0,382.8" fill="none" stroke="#978998" stroke-width="1.4" stroke-linejoin="round"/>
<polyline points="1130.0,585.0 1168.3,604.2" fill="none" stroke="#978998" stroke-width="1.4" stroke-linejoin="round"/>
<polyline points="1130.0,664.3 1157.3,688.9" fill="none" stroke="#978998" stroke-width="1.4" stroke-linejoin="round"/>
<polyline points="1195.6,672.5 1212.0,683.4 1261.2,634.2" fill="none" stroke="#978998" stroke-width="1.4" stroke-linejoin="round"/>
<polyline points="764.0,1000.0 744.4,1025.3 723.3,1052.0 705.0,1074.5" fill="none" stroke="#978998" stroke-width="1.4" stroke-linejoin="round"/>
<polyline points="721.9,1000.0 744.4,1025.3 806.2,1084.3 828.7,1108.2 866.7,1146.2 892.0,1172.9 907.4,1191.2" fill="none" stroke="#978998" stroke-width="1.4" stroke-linejoin="round"/>
<polyline points="705.0,1030.9 782.3,1109.6" fill="none" stroke="#978998" stroke-width="1.4" stroke-linejoin="round"/>
<polyline points="769.7,1050.6 778.1,1042.2 789.3,1050.6 811.8,1074.5" fill="none" stroke="#978998" stroke-width="1.4" stroke-linejoin="round"/>
<polyline points="762.6,1095.6 727.5,1137.8 727.5,1146.2 744.4,1160.2" fill="none" stroke="#978998" stroke-width="1.4" stroke-linejoin="round"/>
<polyline points="705.0,1143.4 735.9,1174.3 796.4,1236.2 832.9,1274.1" fill="none" stroke="#978998" stroke-width="1.4" stroke-linejoin="round"/>
<polyline points="716.2,1239.0 761.2,1279.7" fill="none" stroke="#978998" stroke-width="1.4" stroke-linejoin="round"/>
<polyline points="705.0,1303.6 726.1,1326.1 757.0,1357.0" fill="none" stroke="#978998" stroke-width="1.4" stroke-linejoin="round"/>
<polyline points="741.5,1307.8 778.1,1341.6" fill="none" stroke="#978998" stroke-width="1.4" stroke-linejoin="round"/>
<polyline points="918.7,1032.3 938.3,1059.0 994.6,1116.7" fill="none" stroke="#978998" stroke-width="1.4" stroke-linejoin="round"/>
<polyline points="884.9,1075.9 890.5,1077.3 907.4,1097.0" fill="none" stroke="#978998" stroke-width="1.4" stroke-linejoin="round"/>
<polyline points="879.3,1000.0 907.4,1028.1 918.7,1030.9 945.4,1035.1 953.8,1039.4 986.1,1063.3 1005.0,1067.5" fill="none" stroke="#978998" stroke-width="1.4" stroke-linejoin="round"/>
<polyline points="870.9,1000.0 806.2,1084.3 782.3,1112.5 752.8,1149.0 735.9,1174.3 716.2,1196.8 705.0,1209.4" fill="none" stroke="#978998" stroke-width="1.4" stroke-linejoin="round"/>
<polyline points="851.2,1064.7 828.7,1108.2 752.8,1194.0 735.9,1216.5 716.2,1234.7 705.0,1240.4" fill="none" stroke="#978998" stroke-width="1.4" stroke-linejoin="round"/>
<polyline points="983.3,1005.6 952.4,1040.8 936.9,1059.0 908.8,1097.0 866.7,1146.2 796.4,1236.2 761.2,1279.7 726.1,1326.1 705.0,1351.4" fill="none" stroke="#978998" stroke-width="1.4" stroke-linejoin="round"/>
<polyline points="956.6,1081.5 946.8,1101.2 901.8,1151.8 892.0,1172.9 828.7,1236.2 823.1,1247.4 758.4,1321.9" fill="none" stroke="#978998" stroke-width="1.4" stroke-linejoin="round"/>
<polyline points="855.4,1137.8 842.8,1153.2 830.1,1156.0 811.8,1150.4 789.3,1168.7 787.9,1202.4 806.2,1223.5" fill="none" stroke="#978998" stroke-width="1.4" stroke-linejoin="round"/>
<polyline points="884.9,1075.9 868.1,1098.4 866.7,1120.9 859.6,1130.7" fill="none" stroke="#978998" stroke-width="1.4" stroke-linejoin="round"/>
<polyline points="705.0,1258.6 721.9,1241.8" fill="none" stroke="#978998" stroke-width="1.4" stroke-linejoin="round"/>
<polyline points="705.0,902.3 741.4,930.3" fill="none" stroke="#978998" stroke-width="1.4" stroke-linejoin="round"/>
<polyline points="705.0,983.6 744.2,933.2 765.3,905.1 777.9,902.3 822.7,948.6 834.0,955.6 853.6,975.2" fill="none" stroke="#978998" stroke-width="1.4" stroke-linejoin="round"/>
<polyline points="705.0,1011.6 721.8,1006.0 747.1,994.8 748.5,980.8" fill="none" stroke="#978998" stroke-width="1.4" stroke-linejoin="round"/>
<polyline points="705.0,992.0 744.2,1025.7 755.5,1040.0" fill="none" stroke="#978998" stroke-width="1.4" stroke-linejoin="round"/>
<polyline points="721.8,1040.0 814.3,937.4" fill="none" stroke="#978998" stroke-width="1.4" stroke-linejoin="round"/>
<polyline points="901.2,958.4 836.8,1040.0" fill="none" stroke="#978998" stroke-width="1.4" stroke-linejoin="round"/>
<polyline points="873.2,994.8 918.1,1031.3 951.7,1040.0" fill="none" stroke="#978998" stroke-width="1.4" stroke-linejoin="round"/>
<polyline points="1005.0,992.0 968.5,1040.0" fill="none" stroke="#978998" stroke-width="1.4" stroke-linejoin="round"/>
<polyline points="946.1,905.1 985.3,863.1 1005.0,835.0" fill="none" stroke="#978998" stroke-width="1.4" stroke-linejoin="round"/>
<polyline points="968.5,926.1 1005.0,882.7" fill="none" stroke="#978998" stroke-width="1.4" stroke-linejoin="round"/>
<polyline points="957.3,868.7 960.1,851.9 985.3,823.8 1005.0,807.0" fill="none" stroke="#978998" stroke-width="1.4" stroke-linejoin="round"/>
<polyline points="747.1,710.3 763.9,686.4 777.9,672.4 803.1,650.0" fill="none" stroke="#978998" stroke-width="1.4" stroke-linejoin="round"/>
<polyline points="735.8,767.7 744.2,779.0 803.1,801.4 825.5,807.0" fill="none" stroke="#978998" stroke-width="1.4" stroke-linejoin="round"/>
<polyline points="777.9,714.5 828.4,762.1 867.6,781.8" fill="none" stroke="#978998" stroke-width="1.4" stroke-linejoin="round"/>
<polyline points="804.5,680.8 819.9,692.1 870.4,706.1 890.0,717.3 901.2,725.7" fill="none" stroke="#978998" stroke-width="1.4" stroke-linejoin="round"/>
<polyline points="873.2,706.1 822.7,790.2" fill="none" stroke="#978998" stroke-width="1.4" stroke-linejoin="round"/>
<polyline points="846.6,650.0 856.4,661.2 890.0,692.1 957.3,745.3 1005.0,767.7" fill="none" stroke="#978998" stroke-width="1.4" stroke-linejoin="round"/>
<polyline points="968.5,673.8 948.9,706.1 951.7,728.5 985.3,745.3 1005.0,739.7" fill="none" stroke="#978998" stroke-width="1.4" stroke-linejoin="round"/>
<polyline points="901.2,756.5 904.0,767.7 932.1,779.0 946.1,773.4" fill="none" stroke="#978998" stroke-width="1.4" stroke-linejoin="round"/>
<polyline points="1000.0,4.6 1004.6,6.2 1027.8,30.9 1084.9,88.0 1106.5,109.6 1168.2,174.4 1180.6,200.0" fill="none" stroke="#978998" stroke-width="1.4" stroke-linejoin="round"/>
<polyline points="1000.0,30.9 1015.4,44.8" fill="none" stroke="#978998" stroke-width="1.4" stroke-linejoin="round"/>
<polyline points="1000.0,105.0 1018.5,118.8" fill="none" stroke="#978998" stroke-width="1.4" stroke-linejoin="round"/>
<polyline points="1050.9,0.0 1072.5,10.8 1108.0,41.7 1123.5,49.4 1143.5,67.9 1155.9,91.1 1169.8,108.0 1197.6,115.8 1211.5,131.2 1240.0,152.8" fill="none" stroke="#978998" stroke-width="1.4" stroke-linejoin="round"/>
<polyline points="1038.6,125.0 1077.2,155.9 1095.7,177.5 1120.4,189.8 1145.1,189.8 1154.3,196.0" fill="none" stroke="#978998" stroke-width="1.4" stroke-linejoin="round"/>
<polyline points="1089.5,130.4 1108.0,140.5 1128.1,148.2 1151.3,165.1" fill="none" stroke="#978998" stroke-width="1.4" stroke-linejoin="round"/>
<polyline points="1114.2,160.5 1126.6,171.3" fill="none" stroke="#978998" stroke-width="1.4" stroke-linejoin="round"/>
<polyline points="1120.4,121.9 1138.9,134.3 1152.8,142.0 1157.4,154.3 1163.6,158.2" fill="none" stroke="#978998" stroke-width="1.4" stroke-linejoin="round"/>
<polyline points="1213.0,166.7 1223.8,177.5" fill="none" stroke="#978998" stroke-width="1.4" stroke-linejoin="round"/>
<polyline points="1027.8,0.0 1015.4,18.5 1000.0,41.7" fill="none" stroke="#978998" stroke-width="1.4" stroke-linejoin="round"/>
<polyline points="1050.9,0.0 1027.8,30.9 1000.0,66.4" fill="none" stroke="#978998" stroke-width="1.4" stroke-linejoin="round"/>
<polyline points="1078.7,0.0 1071.0,10.8" fill="none" stroke="#978998" stroke-width="1.4" stroke-linejoin="round"/>
<polyline points="1084.9,88.0 1075.6,98.8 1046.3,114.2 1030.9,132.7" fill="none" stroke="#978998" stroke-width="1.4" stroke-linejoin="round"/>
<polyline points="1135.8,72.5 1106.5,109.6 1089.5,131.2 1071.0,151.3 1040.1,189.8" fill="none" stroke="#978998" stroke-width="1.4" stroke-linejoin="round"/>
<polyline points="1222.3,47.8 1200.6,55.6 1189.8,69.5 1187.5,92.6 1182.1,101.9 1166.7,109.6 1159.0,112.7 1145.1,135.8 1123.5,160.5 1095.7,177.5 1080.3,200.0" fill="none" stroke="#978998" stroke-width="1.4" stroke-linejoin="round"/>
<polyline points="1240.0,160.5 1220.7,174.4 1216.1,200.0" fill="none" stroke="#978998" stroke-width="1.4" stroke-linejoin="round"/>
<polyline points="1057.1,138.9 1046.3,163.6" fill="none" stroke="#978998" stroke-width="1.4" stroke-linejoin="round"/>
<polyline points="1095.7,135.8 1092.6,151.3 1080.3,166.7" fill="none" stroke="#978998" stroke-width="1.4" stroke-linejoin="round"/>
<polyline points="1137.4,155.9 1123.5,176.0 1123.5,189.8" fill="none" stroke="#978998" stroke-width="1.4" stroke-linejoin="round"/>
<polyline points="1162.1,160.5 1148.2,189.8" fill="none" stroke="#978998" stroke-width="1.4" stroke-linejoin="round"/>
<polyline points="1199.1,115.8 1182.1,146.6 1163.6,158.2 1155.9,149.7 1152.8,142.0" fill="none" stroke="#978998" stroke-width="1.4" stroke-linejoin="round"/>
<polyline points="1089.5,63.3 1108.0,44.8 1111.1,30.9 1123.5,18.5 1129.6,17.7 1138.9,24.7 1146.6,24.7 1155.9,12.3 1154.3,0.0" fill="none" stroke="#978998" stroke-width="1.4" stroke-linejoin="round"/>
<polyline points="1089.5,63.3 1089.5,83.3 1094.2,91.1 1109.6,94.2 1118.8,88.0 1123.5,72.5 1129.6,69.5 1135.8,72.5" fill="none" stroke="#978998" stroke-width="1.4" stroke-linejoin="round"/>
<polyline points="1148.2,80.3 1123.5,94.2 1117.3,101.9 1120.4,120.4 1129.6,125.0 1138.9,129.6" fill="none" stroke="#978998" stroke-width="1.4" stroke-linejoin="round"/>
<polyline points="1043.2,17.0 1047.8,38.6 1061.7,39.4 1067.9,27.8 1071.0,12.3 1061.7,6.2 1050.9,3.1" fill="none" stroke="#978998" stroke-width="1.4" stroke-linejoin="round"/>
<polyline points="1186.8,0.0 1183.7,9.3 1169.8,18.5 1155.9,12.3" fill="none" stroke="#978998" stroke-width="1.4" stroke-linejoin="round"/>
<polyline points="1199.1,61.7 1213.0,46.3 1225.3,46.3 1240.0,52.5" fill="none" stroke="#978998" stroke-width="1.4" stroke-linejoin="round"/>
<polyline points="1075.6,98.8 1081.8,106.5 1081.8,117.3 1089.5,131.2" fill="none" stroke="#978998" stroke-width="1.4" stroke-linejoin="round"/>
<polyline points="1046.3,114.2 1057.1,120.4 1081.8,115.0" fill="none" stroke="#978998" stroke-width="1.4" stroke-linejoin="round"/>
<polyline points="1188.3,69.5 1200.6,78.7 1213.0,91.1 1220.7,89.5 1223.8,77.2 1211.5,66.4" fill="none" stroke="#978998" stroke-width="1.4" stroke-linejoin="round"/>
<polyline points="1206.8,54.0 1208.4,58.7 1222.3,72.5" fill="none" stroke="#978998" stroke-width="1.4" stroke-linejoin="round"/>
<polyline points="1197.6,35.5 1206.8,49.4" fill="none" stroke="#978998" stroke-width="1.4" stroke-linejoin="round"/>
<polyline points="1209.9,91.1 1208.4,112.7 1197.6,115.8" fill="none" stroke="#978998" stroke-width="1.4" stroke-linejoin="round"/>
<polyline points="1240.0,152.8 1240.0,152.8" fill="none" stroke="#978998" stroke-width="1.4" stroke-linejoin="round"/>
<polyline points="1030.9,132.7 1037.0,152.8 1055.6,171.3 1086.4,184.6 1108.0,189.8" fill="none" stroke="#978998" stroke-width="1.4" stroke-linejoin="round"/>
<polyline points="1225.3,15.4 1216.1,23.2 1214.5,9.3 1219.2,0.0" fill="none" stroke="#978998" stroke-width="1.4" stroke-linejoin="round"/>
<polyline points="842.1,0.0 853.4,10.3 877.0,35.0 902.8,60.7 929.5,87.5 958.3,117.3 969.6,135.0" fill="none" stroke="#978998" stroke-width="1.4" stroke-linejoin="round"/>
<polyline points="863.7,0.0 870.9,6.2 879.1,16.5 887.3,24.7 895.6,30.9 913.1,50.4 922.3,58.6 926.4,67.9 936.7,78.2" fill="none" stroke="#978998" stroke-width="1.4" stroke-linejoin="round"/>
<polyline points="885.3,0.0 897.6,13.4 922.3,41.2 946.0,65.9 960.4,76.1 966.6,90.5 974.8,96.7" fill="none" stroke="#978998" stroke-width="1.4" stroke-linejoin="round"/>
<polyline points="949.1,0.0 959.4,10.3 973.8,23.7 983.0,39.1 990.2,56.6 1000.0,64.8" fill="none" stroke="#978998" stroke-width="1.4" stroke-linejoin="round"/>
<polyline points="974.8,0.0 977.9,5.1 988.2,20.6 1000.0,30.9" fill="none" stroke="#978998" stroke-width="1.4" stroke-linejoin="round"/>
<polyline points="982.0,89.5 1000.0,104.9" fill="none" stroke="#978998" stroke-width="1.4" stroke-linejoin="round"/>
<polyline points="860.6,0.0 852.3,10.3" fill="none" stroke="#978998" stroke-width="1.4" stroke-linejoin="round"/>
<polyline points="906.9,0.0 903.8,7.2 897.6,13.4 887.3,24.7 877.0,35.0" fill="none" stroke="#978998" stroke-width="1.4" stroke-linejoin="round"/>
<polyline points="924.4,0.0 914.1,13.4 905.9,21.6 894.5,30.9" fill="none" stroke="#978998" stroke-width="1.4" stroke-linejoin="round"/>
<polyline points="968.6,0.0 959.4,10.3 948.0,19.5 931.6,31.9 922.3,41.2 913.1,50.4 902.8,60.7" fill="none" stroke="#978998" stroke-width="1.4" stroke-linejoin="round"/>
<polyline points="1000.0,14.4 993.3,26.8 987.1,35.0 983.0,39.1 947.0,65.9 936.7,78.2 929.5,87.5" fill="none" stroke="#978998" stroke-width="1.4" stroke-linejoin="round"/>
<polyline points="984.0,0.0 977.9,5.1 966.6,16.5" fill="none" stroke="#978998" stroke-width="1.4" stroke-linejoin="round"/>
<polyline points="1000.0,44.2 982.0,67.9 990.2,78.2" fill="none" stroke="#978998" stroke-width="1.4" stroke-linejoin="round"/>
<polyline points="1000.0,65.9 958.3,117.3 944.9,135.0" fill="none" stroke="#978998" stroke-width="1.4" stroke-linejoin="round"/>
<polyline points="1240.0,26.2 1274.0,57.1 1286.3,67.9 1306.4,79.5 1311.0,88.0 1320.3,97.2 1323.3,106.5 1328.0,114.2 1334.2,115.8 1431.4,41.7 1466.9,35.5 1480.0,32.4" fill="none" stroke="#978998" stroke-width="1.4" stroke-linejoin="round"/>
<polyline points="1240.0,55.6 1252.3,57.1 1261.6,65.6 1270.9,61.7 1272.4,56.3" fill="none" stroke="#978998" stroke-width="1.4" stroke-linejoin="round"/>
<polyline points="1317.2,0.0 1332.6,13.9" fill="none" stroke="#978998" stroke-width="1.4" stroke-linejoin="round"/>
<polyline points="1383.5,0.0 1403.6,16.2 1417.5,0.0" fill="none" stroke="#978998" stroke-width="1.4" stroke-linejoin="round"/>
<polyline points="1240.0,104.2 1266.2,128.1 1297.1,154.3 1315.6,169.8 1329.5,185.2" fill="none" stroke="#978998" stroke-width="1.4" stroke-linejoin="round"/>
<polyline points="1264.7,128.1 1252.3,146.6 1253.9,152.8 1240.0,157.4" fill="none" stroke="#978998" stroke-width="1.4" stroke-linejoin="round"/>
<polyline points="1240.0,196.0 1255.4,176.0 1266.2,172.9 1274.0,179.0 1290.9,185.2 1295.6,196.0" fill="none" stroke="#978998" stroke-width="1.4" stroke-linejoin="round"/>
<polyline points="1253.9,152.8 1261.6,154.3 1267.8,163.6 1266.2,172.9" fill="none" stroke="#978998" stroke-width="1.4" stroke-linejoin="round"/>
<polyline points="1275.5,179.0 1283.2,163.6 1307.9,135.8 1315.6,132.7 1322.6,135.8 1323.3,157.4 1315.6,168.2 1317.2,180.6 1328.0,184.4" fill="none" stroke="#978998" stroke-width="1.4" stroke-linejoin="round"/>
<polyline points="1323.3,142.0 1351.1,159.0" fill="none" stroke="#978998" stroke-width="1.4" stroke-linejoin="round"/>
<polyline points="1399.0,111.1 1411.3,115.0 1426.8,109.6 1480.0,81.8" fill="none" stroke="#978998" stroke-width="1.4" stroke-linejoin="round"/>
<polyline points="1426.8,109.6 1457.6,142.0 1480.0,140.5" fill="none" stroke="#978998" stroke-width="1.4" stroke-linejoin="round"/>
<polyline points="1445.3,131.2 1422.1,142.0 1392.8,171.3 1378.9,189.8 1375.8,200.0" fill="none" stroke="#978998" stroke-width="1.4" stroke-linejoin="round"/>
<polyline points="1480.0,186.8 1468.4,200.0" fill="none" stroke="#978998" stroke-width="1.4" stroke-linejoin="round"/>
<polyline points="1453.0,3.1 1445.3,19.3 1425.2,28.6 1423.7,21.6 1427.5,13.1" fill="none" stroke="#978998" stroke-width="1.4" stroke-linejoin="round"/>
<polyline points="1027.8,190.0 1034.0,197.7 1086.4,244.0 1117.3,279.5 1155.9,321.2 1197.6,359.8" fill="none" stroke="#978998" stroke-width="1.4" stroke-linejoin="round"/>
<polyline points="1009.3,220.9 1010.8,227.0 1000.0,240.9" fill="none" stroke="#978998" stroke-width="1.4" stroke-linejoin="round"/>
<polyline points="1080.3,190.0 1078.7,200.8 1121.9,217.8 1148.2,219.3 1162.1,222.4 1176.0,227.0" fill="none" stroke="#978998" stroke-width="1.4" stroke-linejoin="round"/>
<polyline points="1132.7,190.0 1129.6,217.8" fill="none" stroke="#978998" stroke-width="1.4" stroke-linejoin="round"/>
<polyline points="1149.7,190.0 1157.4,195.4" fill="none" stroke="#978998" stroke-width="1.4" stroke-linejoin="round"/>
<polyline points="1160.5,190.0 1149.7,203.9 1148.2,222.4 1145.1,230.1 1134.3,237.8 1126.6,237.8 1108.0,230.1 1078.7,200.8" fill="none" stroke="#978998" stroke-width="1.4" stroke-linejoin="round"/>
<polyline points="1185.2,213.2 1194.5,210.1 1206.8,220.9 1216.1,239.4 1222.3,244.0 1222.3,254.8 1217.6,268.7 1196.0,295.0" fill="none" stroke="#978998" stroke-width="1.4" stroke-linejoin="round"/>
<polyline points="1177.5,227.0 1162.1,245.6 1157.4,254.8 1163.6,261.0 1185.2,282.6 1208.4,305.8 1219.2,302.7 1236.1,278.0 1240.0,273.3" fill="none" stroke="#978998" stroke-width="1.4" stroke-linejoin="round"/>
<polyline points="1177.5,228.6 1216.1,268.7 1236.1,276.4" fill="none" stroke="#978998" stroke-width="1.4" stroke-linejoin="round"/>
<polyline points="1196.0,196.2 1202.2,193.1 1216.1,194.6 1220.7,203.9 1236.1,197.7" fill="none" stroke="#978998" stroke-width="1.4" stroke-linejoin="round"/>
<polyline points="1219.2,203.9 1208.4,220.9" fill="none" stroke="#978998" stroke-width="1.4" stroke-linejoin="round"/>
<polyline points="1040.1,281.1 1054.0,279.5 1071.0,291.9 1084.9,301.1 1097.2,301.1 1100.3,303.4" fill="none" stroke="#978998" stroke-width="1.4" stroke-linejoin="round"/>
<polyline points="1058.7,299.6 1086.4,318.1 1092.6,321.2 1114.2,327.4 1132.7,338.2 1123.5,353.6" fill="none" stroke="#978998" stroke-width="1.4" stroke-linejoin="round"/>
<polyline points="1072.5,293.4 1038.6,330.5" fill="none" stroke="#978998" stroke-width="1.4" stroke-linejoin="round"/>
<polyline points="1046.3,324.3 1054.0,336.6 1067.9,344.3" fill="none" stroke="#978998" stroke-width="1.4" stroke-linejoin="round"/>
<polyline points="1131.2,345.9 1135.8,347.4 1138.9,342.8 1145.1,344.3 1149.7,353.6 1163.6,359.8" fill="none" stroke="#978998" stroke-width="1.4" stroke-linejoin="round"/>
<polyline points="1152.8,355.1 1142.0,359.8 1138.9,375.2 1132.7,390.0" fill="none" stroke="#978998" stroke-width="1.4" stroke-linejoin="round"/>
<polyline points="1006.2,367.5 1021.6,378.3 1029.3,390.0" fill="none" stroke="#978998" stroke-width="1.4" stroke-linejoin="round"/>
<polyline points="1115.8,327.4 1111.1,344.3" fill="none" stroke="#978998" stroke-width="1.4" stroke-linejoin="round"/>
<polyline points="1216.1,338.2 1199.1,359.8" fill="none" stroke="#978998" stroke-width="1.4" stroke-linejoin="round"/>
<polyline points="1208.4,364.4 1240.0,366.0" fill="none" stroke="#978998" stroke-width="1.4" stroke-linejoin="round"/>
<polyline points="883.5,366.0 900.5,355.1 906.6,342.0" fill="none" stroke="#978998" stroke-width="1.4" stroke-linejoin="round"/>
<polyline points="920.5,367.5 914.3,376.8 912.8,390.0" fill="none" stroke="#978998" stroke-width="1.4" stroke-linejoin="round"/>
<polyline points="919.0,372.1 936.0,390.0" fill="none" stroke="#978998" stroke-width="1.4" stroke-linejoin="round"/>
<polyline points="991.5,378.3 1000.0,372.1" fill="none" stroke="#978998" stroke-width="1.4" stroke-linejoin="round"/>
<polyline points="951.4,382.2 943.7,390.0" fill="none" stroke="#978998" stroke-width="1.4" stroke-linejoin="round"/>
<polyline points="880.0,364.7 893.9,376.3 926.3,410.3 946.4,430.3 960.3,444.2 977.2,462.7" fill="none" stroke="#978998" stroke-width="1.4" stroke-linejoin="round"/>
<polyline points="917.8,371.7 954.1,408.7 972.6,428.8 985.0,444.2" fill="none" stroke="#978998" stroke-width="1.4" stroke-linejoin="round"/>
<polyline points="924.8,330.0 880.0,391.7" fill="none" stroke="#978998" stroke-width="1.4" stroke-linejoin="round"/>
<polyline points="951.8,382.5 909.3,425.7 892.3,435.7 883.9,448.1" fill="none" stroke="#978998" stroke-width="1.4" stroke-linejoin="round"/>
<polyline points="910.9,424.9 920.9,436.5 920.1,455.0 926.3,464.3 946.4,489.0 961.8,499.8" fill="none" stroke="#978998" stroke-width="1.4" stroke-linejoin="round"/>
<polyline points="1120.0,444.2 1105.3,478.2 1072.9,515.2" fill="none" stroke="#978998" stroke-width="1.4" stroke-linejoin="round"/>
<polyline points="1088.4,476.6 1065.2,498.2 1049.8,498.2" fill="none" stroke="#978998" stroke-width="1.4" stroke-linejoin="round"/>
<polyline points="1080.6,405.6 1117.7,439.6" fill="none" stroke="#978998" stroke-width="1.4" stroke-linejoin="round"/>
<polyline points="1051.3,330.0 1056.0,336.2 1065.2,342.3 1069.8,343.9" fill="none" stroke="#978998" stroke-width="1.4" stroke-linejoin="round"/>
<polyline points="1045.6,690.1 1062.5,705.6 1076.4,721.0 1095.0,739.5 1111.9,755.0 1121.2,767.3 1147.4,792.0 1152.1,793.5" fill="none" stroke="#978998" stroke-width="1.4" stroke-linejoin="round"/>
<polyline points="1133.5,699.4 1153.6,716.4 1173.7,738.0 1182.9,747.2" fill="none" stroke="#978998" stroke-width="1.4" stroke-linejoin="round"/>
<polyline points="990.0,677.8 999.3,680.9 1011.6,699.4 1025.5,700.9 1036.3,691.7 1045.6,690.1" fill="none" stroke="#978998" stroke-width="1.4" stroke-linejoin="round"/>
<polyline points="1020.9,702.5 1025.5,716.4 1008.5,733.3 999.3,745.7 990.0,748.8" fill="none" stroke="#978998" stroke-width="1.4" stroke-linejoin="round"/>
<polyline points="1002.3,795.1 1011.6,810.5 1027.0,832.1 1047.1,850.0" fill="none" stroke="#978998" stroke-width="1.4" stroke-linejoin="round"/>
<polyline points="1144.3,682.4 1133.5,700.9 1121.2,714.8 1110.4,721.0 1096.5,739.5 1076.4,767.3 1028.6,832.1 1016.2,850.0" fill="none" stroke="#978998" stroke-width="1.4" stroke-linejoin="round"/>
<polyline points="1159.8,714.8 1135.1,731.8 1111.9,755.0" fill="none" stroke="#978998" stroke-width="1.4" stroke-linejoin="round"/>
<polyline points="1173.7,738.0 1155.1,756.5 1149.0,767.3 1147.4,792.0" fill="none" stroke="#978998" stroke-width="1.4" stroke-linejoin="round"/>
<polyline points="1121.2,767.3 1110.4,778.1 1104.2,779.6 1051.7,850.0" fill="none" stroke="#978998" stroke-width="1.4" stroke-linejoin="round"/>
<polyline points="1147.4,792.0 1104.2,850.0" fill="none" stroke="#978998" stroke-width="1.4" stroke-linejoin="round"/>
<polyline points="1057.9,742.6 1040.9,745.7 1028.6,758.0" fill="none" stroke="#978998" stroke-width="1.4" stroke-linejoin="round"/>
<polyline points="1010.1,810.5 990.0,832.1" fill="none" stroke="#978998" stroke-width="1.4" stroke-linejoin="round"/>
<polyline points="880.0,523.2 904.7,547.8 923.2,566.4 940.2,575.6 951.0,576.4 972.6,574.1 1000.4,570.2 1017.4,575.6" fill="none" stroke="#978998" stroke-width="1.4" stroke-linejoin="round"/>
<polyline points="961.8,500.0 954.1,506.2 946.4,523.2 946.4,552.5 941.7,575.6" fill="none" stroke="#978998" stroke-width="1.4" stroke-linejoin="round"/>
<polyline points="936.3,524.7 974.2,526.2 977.2,530.9 977.2,540.1 963.3,558.7" fill="none" stroke="#978998" stroke-width="1.4" stroke-linejoin="round"/>
<polyline points="977.2,540.1 986.5,549.4 1017.4,551.7" fill="none" stroke="#978998" stroke-width="1.4" stroke-linejoin="round"/>
<polyline points="946.4,552.5 952.5,552.5 971.1,566.4 971.1,574.1" fill="none" stroke="#978998" stroke-width="1.4" stroke-linejoin="round"/>
<polyline points="986.5,549.4 971.1,566.4" fill="none" stroke="#978998" stroke-width="1.4" stroke-linejoin="round"/>
<polyline points="1000.4,500.0 1003.5,507.7 1012.7,518.5 1006.6,527.8 1003.5,550.9 1003.5,561.7 1006.6,571.0" fill="none" stroke="#978998" stroke-width="1.4" stroke-linejoin="round"/>
<polyline points="1012.7,518.5 1029.7,527.0 1040.5,527.8 1054.4,537.0 1088.4,564.8 1120.0,598.8" fill="none" stroke="#978998" stroke-width="1.4" stroke-linejoin="round"/>
<polyline points="1046.7,500.0 1037.4,509.3 1029.7,527.0 1026.6,543.2 1022.0,561.7 1017.4,575.6 1003.5,608.0 978.8,634.3 955.6,662.1 927.8,700.0" fill="none" stroke="#978998" stroke-width="1.4" stroke-linejoin="round"/>
<polyline points="1086.8,500.0 1072.9,515.4 1054.4,537.0 1042.1,552.5 1020.5,567.9 1017.4,575.6" fill="none" stroke="#978998" stroke-width="1.4" stroke-linejoin="round"/>
<polyline points="1049.8,500.0 1057.5,504.6 1072.9,515.4" fill="none" stroke="#978998" stroke-width="1.4" stroke-linejoin="round"/>
<polyline points="1071.4,500.0 1072.9,513.9" fill="none" stroke="#978998" stroke-width="1.4" stroke-linejoin="round"/>
<polyline points="880.0,621.9 898.5,635.8 929.4,628.1 941.7,621.9 958.7,620.4 975.7,631.2 988.0,645.1 1000.4,655.9 1017.4,660.5 1049.8,648.2 1074.5,638.9 1079.1,638.9" fill="none" stroke="#978998" stroke-width="1.4" stroke-linejoin="round"/>
<polyline points="880.0,683.7 889.3,691.4 898.5,700.0" fill="none" stroke="#978998" stroke-width="1.4" stroke-linejoin="round"/>
<polyline points="941.0,621.2 930.9,632.7 917.0,649.7 890.8,700.0" fill="none" stroke="#978998" stroke-width="1.4" stroke-linejoin="round"/>
<polyline points="957.2,666.7 972.6,672.9 997.3,682.1 1011.2,700.0" fill="none" stroke="#978998" stroke-width="1.4" stroke-linejoin="round"/>
<polyline points="972.6,672.9 963.3,700.0" fill="none" stroke="#978998" stroke-width="1.4" stroke-linejoin="round"/>
<polyline points="1026.6,700.0 1046.7,689.8 1065.2,700.0" fill="none" stroke="#978998" stroke-width="1.4" stroke-linejoin="round"/>
<polyline points="1076.0,660.5 1086.8,676.0" fill="none" stroke="#978998" stroke-width="1.4" stroke-linejoin="round"/>
<polyline points="927.8,700.0 909.9,720.0 885.7,752.0 861.6,782.0 840.0,810.6 828.0,826.0" fill="none" stroke="#978998" stroke-width="1.4" stroke-linejoin="round"/>
<polyline points="867.6,720.0 850.0,740.7" fill="none" stroke="#978998" stroke-width="1.4" stroke-linejoin="round"/>
<polyline points="888.3,720.0 902.0,731.0 907.0,733.0" fill="none" stroke="#978998" stroke-width="1.4" stroke-linejoin="round"/>
<polyline points="886.6,752.8 895.0,761.4 900.4,761.4 901.3,756.2 910.0,749.3" fill="none" stroke="#978998" stroke-width="1.4" stroke-linejoin="round"/>
<polyline points="901.3,756.2 901.3,764.9 910.7,774.4 922.8,776.5 931.5,781.3 937.5,777.8" fill="none" stroke="#978998" stroke-width="1.4" stroke-linejoin="round"/>
<polyline points="840.0,771.0 849.5,774.4 861.6,781.7" fill="none" stroke="#978998" stroke-width="1.4" stroke-linejoin="round"/>
<polyline points="746.0,332.0 705.0,382.0" fill="none" stroke="#978998" stroke-width="1.4" stroke-linejoin="round"/>
<polyline points="718.7,412.9 720.8,414.8 705.0,433.5" fill="none" stroke="#978998" stroke-width="1.4" stroke-linejoin="round"/>
<polyline points="1395.9,240.9 1388.2,247.1 1374.3,276.4 1361.9,281.1 1320.3,335.1 1326.4,344.3 1318.7,359.8" fill="none" stroke="#978998" stroke-width="1.4" stroke-linejoin="round"/>
<polyline points="1240.0,313.5 1249.3,311.9 1266.2,296.5 1280.1,287.2" fill="none" stroke="#978998" stroke-width="1.4" stroke-linejoin="round"/>
<polyline points="1361.9,367.5 1340.3,390.0" fill="none" stroke="#978998" stroke-width="1.4" stroke-linejoin="round"/>
<polyline points="1345.9,0.0 1332.2,27.3 1321.3,41.0 1285.8,71.1 1255.7,106.6 1225.7,142.1 1184.7,196.8 1157.3,232.3 1130.0,262.4" fill="none" stroke="#978998" stroke-width="2.2" stroke-linejoin="round"/>
<polyline points="1130.0,267.8 1063.0,350.1" fill="none" stroke="#978998" stroke-width="2.2" stroke-linejoin="round"/>
<polyline points="1063.0,350.0 978.3,456.6 929.1,519.4 874.4,587.8 787.0,700.1" fill="none" stroke="#978998" stroke-width="2.2" stroke-linejoin="round"/>
<polyline points="1033.0,196.8 1016.6,215.9 1008.4,221.4 981.0,226.8 931.8,287.0 918.2,303.4 885.4,328.0 866.2,350.1" fill="none" stroke="#978998" stroke-width="2.2" stroke-linejoin="round"/>
<polyline points="866.2,350.0 858.0,360.9 856.7,414.2 819.8,459.3 806.1,489.4 762.4,542.7" fill="none" stroke="#978998" stroke-width="2.2" stroke-linejoin="round"/>
<polyline points="1555.0,142.1 1488.0,177.6 1447.0,224.1 1419.7,262.4 1348.6,350.1" fill="none" stroke="#978998" stroke-width="2.2" stroke-linejoin="round"/>
<polyline points="1348.6,350.0 1326.8,388.3 1288.5,423.8 1277.6,442.9 1244.8,483.9 1209.3,527.6 1184.7,557.7" fill="none" stroke="#978998" stroke-width="2.2" stroke-linejoin="round"/>
<polyline points="1493.5,350.0 1427.9,432.0 1392.4,478.5 1356.8,525.0 1315.8,576.8 1285.8,615.0 1272.0,634.0 1190.0,741.0 1152.8,792.7 1155.7,818.6 1144.0,864.6 1129.8,904.9 1112.5,916.4 1069.4,959.5 1050.5,991.2 1036.2,1011.8 1031.5,1019.7 1025.0,1089.5 1005.0,1109.6" fill="none" stroke="#978998" stroke-width="2.2" stroke-linejoin="round"/>
<polyline points="1005.0,1109.6 972.1,1143.4 932.7,1168.7 907.4,1191.2 851.2,1244.6 845.6,1261.5 828.7,1283.9 797.8,1320.5 779.5,1343.0 721.9,1385.2 705.0,1391.1" fill="none" stroke="#978998" stroke-width="2.2" stroke-linejoin="round"/>
<polyline points="705.0,666.8 741.4,703.3 759.7,732.7 777.9,748.1 811.5,773.4 839.6,801.4 887.2,846.2 929.3,885.5 940.5,899.5 965.7,927.5 1005.0,958.4" fill="none" stroke="#978998" stroke-width="2.2" stroke-linejoin="round"/>
<polyline points="825.5,650.0 805.9,678.0 759.7,732.7 735.8,767.7 705.0,805.6" fill="none" stroke="#978998" stroke-width="2.2" stroke-linejoin="round"/>
<polyline points="1216.1,0.0 1206.8,27.8 1188.3,38.6 1179.0,46.3 1171.3,54.0 1145.1,67.9 1132.7,74.1 1123.5,80.3 1106.5,109.6" fill="none" stroke="#978998" stroke-width="2.2" stroke-linejoin="round"/>
<polyline points="1130.0,5.5 1179.2,46.5 1255.7,106.6 1348.6,196.8 1419.7,265.1 1494.9,341.6 1496.2,350.1" fill="none" stroke="#978998" stroke-width="2.2" stroke-linejoin="round"/>
<polyline points="811.6,0.0 830.7,16.4 858.0,49.2 901.8,92.9 920.9,106.6 964.6,139.4 974.2,155.8 975.6,169.4 970.1,185.8 951.0,207.7 896.3,273.3 858.0,317.0 844.4,350.1" fill="none" stroke="#978998" stroke-width="3.8" stroke-linejoin="round"/>
<polyline points="844.4,350.0 838.9,377.3 833.5,399.2 819.8,415.6 754.2,483.9 737.8,508.5 726.9,541.3 715.9,609.6 710.5,650.6 705.0,669.8" fill="none" stroke="#978998" stroke-width="3.8" stroke-linejoin="round"/>
<polyline points="1123.1,0.0 1093.1,32.8 1060.3,65.6 1030.2,103.9 1008.4,133.9 1000.2,153.0 1005.6,169.4 1033.0,191.3 1074.0,218.6 1130.0,251.4" fill="none" stroke="#978998" stroke-width="3.8" stroke-linejoin="round"/>
<polyline points="1130.0,254.2 1162.8,278.8 1209.3,322.5 1220.2,333.4 1222.9,350.1" fill="none" stroke="#978998" stroke-width="3.8" stroke-linejoin="round"/>
<polyline points="1496.2,0.0 1485.3,10.9 1455.2,35.5 1403.3,103.9 1356.8,164.0 1337.7,185.8 1307.6,226.8 1274.8,267.8 1244.8,306.1 1225.7,328.0 1222.9,350.1" fill="none" stroke="#978998" stroke-width="3.8" stroke-linejoin="round"/>
<polyline points="1224.3,350.0 1227.0,432.0 1228.4,473.0 1225.7,500.3 1212.0,524.9 1179.2,565.9 1130.0,626.0" fill="none" stroke="#978998" stroke-width="3.8" stroke-linejoin="round"/>
<polyline points="1130.0,626.0 1106.7,661.6 1071.2,700.0 994.7,793.0 937.3,869.4 876.2,950.0 705.0,1162.4" fill="none" stroke="#978998" stroke-width="3.8" stroke-linejoin="round"/>
<circle cx="1094.6" cy="362.4" r="26.3" fill="#c76a6a" fill-opacity="0.85" stroke="#8e2638" stroke-width="1.6"/>
<circle cx="1051.8" cy="400.3" r="26.3" fill="#eea04a" fill-opacity="0.85" stroke="#cc6a1e" stroke-width="1.6"/>
<circle cx="1019.8" cy="424.2" r="26.3" fill="#ecec50" fill-opacity="0.85" stroke="#bcbc30" stroke-width="1.6"/>
<circle cx="1025.8" cy="430" r="26.3" fill="#c4525e" fill-opacity="0.85" stroke="#8e2638" stroke-width="1.6"/>
<circle cx="1191.2" cy="386" r="26.3" fill="#c76a6a" fill-opacity="0.85" stroke="#8e2638" stroke-width="1.6"/>
<circle cx="1302.3" cy="385.5" r="26.3" fill="#eea04a" fill-opacity="0.85" stroke="#cc6a1e" stroke-width="1.6"/>
<circle cx="1303.7" cy="497.6" r="26.3" fill="#c76a6a" fill-opacity="0.85" stroke="#8e2638" stroke-width="1.6"/>
<circle cx="900.4" cy="493.5" r="26.3" fill="#e38c58" fill-opacity="0.85" stroke="#bd5222" stroke-width="1.6"/>
<circle cx="1124" cy="513.3" r="26.3" fill="#eea04a" fill-opacity="0.85" stroke="#cc6a1e" stroke-width="1.6"/>
<circle cx="1134.5" cy="521.3" r="26.3" fill="#d4665a" fill-opacity="0.85" stroke="#a03a3a" stroke-width="1.6"/>
<circle cx="1102.3" cy="548.5" r="26.3" fill="#e38c58" fill-opacity="0.85" stroke="#bd5222" stroke-width="1.6"/>
<circle cx="1162.7" cy="621" r="26.3" fill="#eea04a" fill-opacity="0.85" stroke="#cc6a1e" stroke-width="1.6"/>
<circle cx="1150" cy="572.7" r="26.3" fill="#c4525e" fill-opacity="0.85" stroke="#8e2638" stroke-width="1.6"/>
<circle cx="1210" cy="594.8" r="26.3" fill="#c76a6a" fill-opacity="0.85" stroke="#8e2638" stroke-width="1.6"/>
<circle cx="1178.8" cy="600.8" r="26.3" fill="#c4525e" fill-opacity="0.85" stroke="#8e2638" stroke-width="1.6"/>
<circle cx="1199" cy="605" r="26.3" fill="#eea04a" fill-opacity="0.85" stroke="#cc6a1e" stroke-width="1.6"/>
<circle cx="1192.8" cy="610" r="26.3" fill="#d4665a" fill-opacity="0.85" stroke="#a03a3a" stroke-width="1.6"/>
<circle cx="1224.7" cy="624" r="26.3" fill="#e38c58" fill-opacity="0.85" stroke="#bd5222" stroke-width="1.6"/>
<circle cx="1263.3" cy="645" r="26.3" fill="#eea04a" fill-opacity="0.85" stroke="#cc6a1e" stroke-width="1.6"/>
<circle cx="1106.3" cy="635" r="26.3" fill="#eea04a" fill-opacity="0.85" stroke="#cc6a1e" stroke-width="1.6"/>
<circle cx="1170.3" cy="663.6" r="26.3" fill="#eea04a" fill-opacity="0.85" stroke="#cc6a1e" stroke-width="1.6"/>
<circle cx="1157.2" cy="653.6" r="26.3" fill="#ecec50" fill-opacity="0.85" stroke="#bcbc30" stroke-width="1.6"/>
<circle cx="1178.8" cy="695.4" r="26.3" fill="#e38c58" fill-opacity="0.85" stroke="#bd5222" stroke-width="1.6"/>
<circle cx="1244.2" cy="685.4" r="26.3" fill="#e38c58" fill-opacity="0.85" stroke="#bd5222" stroke-width="1.6"/>
<circle cx="1201" cy="711.5" r="26.3" fill="#e38c58" fill-opacity="0.85" stroke="#bd5222" stroke-width="1.6"/>
<circle cx="1212" cy="712.6" r="26.3" fill="#eea04a" fill-opacity="0.85" stroke="#cc6a1e" stroke-width="1.6"/>
<circle cx="822.5" cy="745.1" r="26.3" fill="#e38c58" fill-opacity="0.85" stroke="#bd5222" stroke-width="1.6"/>
<circle cx="933.8" cy="735.5" r="26.3" fill="#ecec50" fill-opacity="0.85" stroke="#bcbc30" stroke-width="1.6"/>
<circle cx="963.3" cy="786.9" r="26.3" fill="#ecec50" fill-opacity="0.85" stroke="#bcbc30" stroke-width="1.6"/>
<circle cx="907.2" cy="868.6" r="26.3" fill="#eea04a" fill-opacity="0.85" stroke="#cc6a1e" stroke-width="1.6"/>
<circle cx="1012.5" cy="906.3" r="26.3" fill="#e38c58" fill-opacity="0.85" stroke="#bd5222" stroke-width="1.6"/>
<circle cx="1045.3" cy="979.3" r="26.3" fill="#e38c58" fill-opacity="0.85" stroke="#bd5222" stroke-width="1.6"/>
<circle cx="907.8" cy="650.6" r="26.3" fill="#ecec50" fill-opacity="0.85" stroke="#bcbc30" stroke-width="1.6"/>
</svg>
<div class="b" style="left:0;top:0;width:10px;height:1391px;background:linear-gradient(to right, rgba(0,0,0,0.05), rgba(0,0,0,0))"></div>
<div class="b" style="left:780px;top:13px;width:60px;height:60px;background:#fff;border-radius:8px;box-shadow:0 0 6px rgba(0,0,0,0.12)"></div>
<svg class="b" style="left:780px;top:13px" width="60" height="60" viewBox="1485 13 60 60">
<circle cx="1511.5" cy="39.5" r="9" fill="none" stroke="#1f2d3d" stroke-width="3.8"/>
<path d="M1518.5 46.5 L1527.5 55.5" stroke="#1f2d3d" stroke-width="4.2" stroke-linecap="round"/></svg>
<div class="b" style="left:782px;top:97px;width:58px;height:174px;background:#fff;border-radius:8px;box-shadow:0 0 6px rgba(0,0,0,0.12)"></div>
<svg class="b" style="left:782px;top:97px" width="58" height="174" viewBox="1487 97 58 174">
<line x1="1487" y1="155.8" x2="1545" y2="155.8" stroke="#dcdcdc" stroke-width="1.5"/>
<line x1="1487" y1="213.5" x2="1545" y2="213.5" stroke="#dcdcdc" stroke-width="1.5"/>
<path d="M1516 119 V132.5 M1509 125.7 H1523" stroke="#222" stroke-width="3.2" stroke-linecap="round"/>
<path d="M1509 184.4 H1523" stroke="#222" stroke-width="3.2" stroke-linecap="round"/>
<path d="M1516.9 234.8 L1521.7 243.8 H1512.1 Z" fill="#222"/>
<path d="M1516.9 255.8 L1521.7 246.9 H1512.1 Z" fill="#c8c8c8"/>
</svg>
</div>
</body></html>
